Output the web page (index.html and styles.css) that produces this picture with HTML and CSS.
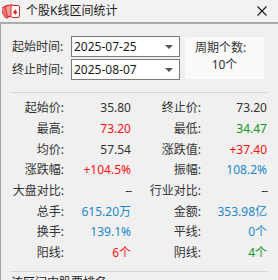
FILE: index.html
```html
<!DOCTYPE html>
<html lang="zh-CN">
<head>
<meta charset="utf-8">
<title>个股K线区间统计</title>
<link rel="stylesheet" href="styles.css">
</head>
<body>
<div class="window">
  <div class="titlebar">
    <svg class="app-icon" width="19" height="16" viewBox="0 0 19 16">
      <g stroke="#d42a2a" stroke-width="1">
        <rect x="3.5" y="2.5" width="8" height="11" rx="1.5" fill="#f07a7a" transform="rotate(-28 7.5 14)"/>
        <rect x="5.5" y="2" width="8" height="11" rx="1.5" fill="#f29a9a" transform="rotate(-12 9.5 14)"/>
        <rect x="9" y="2.5" width="8.5" height="12" rx="1.5" fill="#ffffff"/>
      </g>
      <path d="M13.2 6.2 L15.6 10.2 L10.8 10.2 Z" fill="#d42020"/>
      <rect x="12.8" y="9.8" width="0.9" height="2.2" fill="#d42020"/>
    </svg>
    <span class="title">个股K线区间统计</span>
    <svg class="close" width="10" height="10" viewBox="0 0 10 10">
      <path d="M0.5 0.5 L9.5 9.5 M9.5 0.5 L0.5 9.5" stroke="#1a1a1a" stroke-width="1.1" fill="none"/>
    </svg>
  </div>
  <div class="panel">
    <div class="query">
      <div class="fields">
        <div class="field">
          <span class="field-label">起始时间:</span>
          <div class="combo"><span class="combo-text">2025-07-25</span><span class="arrow"></span></div>
        </div>
        <div class="field">
          <span class="field-label">终止时间:</span>
          <div class="combo"><span class="combo-text">2025-08-07</span><span class="arrow"></span></div>
        </div>
      </div>
      <div class="period">
        <span class="period-label">周期个数:</span>
        <span class="period-value">10个</span>
      </div>
    </div>
    <div class="sep"></div>
    <div class="stats">
      <span class="lbl">起始价:</span><span class="val">35.80</span>
      <span class="lbl">终止价:</span><span class="val">73.20</span>

      <span class="lbl">最高:</span><span class="val red">73.20</span>
      <span class="lbl">最低:</span><span class="val green">34.47</span>

      <span class="lbl">均价:</span><span class="val">57.54</span>
      <span class="lbl">涨跌值:</span><span class="val red">+37.40</span>

      <span class="lbl">涨跌幅:</span><span class="val red">+104.5%</span>
      <span class="lbl">振幅:</span><span class="val blue">108.2%</span>

      <span class="lbl">大盘对比:</span><span class="val dash">--</span>
      <span class="lbl">行业对比:</span><span class="val dash">--</span>

      <span class="lbl">总手:</span><span class="val blue">615.20万</span>
      <span class="lbl">金额:</span><span class="val blue">353.98亿</span>

      <span class="lbl">换手:</span><span class="val blue">139.1%</span>
      <span class="lbl">平线:</span><span class="val blue">0个</span>

      <span class="lbl">阳线:</span><span class="val red">6个</span>
      <span class="lbl">阴线:</span><span class="val green">4个</span>
    </div>
    <div class="sep sep-bottom"></div>
    <div class="footer-text">该区间内股票排名</div>
  </div>
</div>
</body>
</html>
```

FILE: styles.css
```css
html, body {
  margin: 0;
  padding: 0;
}
body {
  width: 278px;
  height: 280px;
  overflow: hidden;
  background: #f0f0f0;
  font-family: "Noto Sans", "Noto Sans CJK SC", sans-serif;
  font-size: 12px;
  color: #333333;
}
.window {
  display: flex;
  flex-direction: column;
  height: 280px;
}
.titlebar {
  height: 22px;
  display: flex;
  align-items: center;
  background: #f2f2f2;
}
.app-icon {
  margin-left: 2px;
  flex: none;
}
.title {
  margin-left: 5px;
  font-size: 12px;
  line-height: 16px;
  color: #1a1a1a;
}
.close {
  margin-left: auto;
  margin-right: 11px;
  flex: none;
}
.panel {
  flex: 1;
  border-top: 2px solid #ababab;
  border-left: 1px solid #a6a6a6;
  background: #f0f0f0;
  overflow: hidden;
}
.query {
  display: flex;
  padding: 12px 0 0 11px;
}
.fields {
  display: flex;
  flex-direction: column;
  gap: 2px;
}
.field {
  display: flex;
  align-items: center;
  height: 21px;
}
.field-label {
  width: 59px;
  line-height: 16px;
  color: #333333;
}
.combo {
  box-sizing: border-box;
  width: 109px;
  height: 21px;
  background: #ffffff;
  border: 1px solid #7a7a7a;
  display: flex;
  align-items: center;
  padding-left: 2px;
}
.combo-text {
  line-height: 16px;
  color: #1a1a1a;
}
.arrow {
  margin-left: auto;
  margin-right: 6px;
  width: 0;
  height: 0;
  border-left: 4px solid transparent;
  border-right: 4px solid transparent;
  border-top: 4px solid #555555;
}
.period {
  margin-left: 5px;
  margin-top: 1px;
  width: 79px;
  height: 42px;
  background: #fafafa;
  display: flex;
  flex-direction: column;
  align-items: center;
  padding-top: 2px;
  box-sizing: border-box;
}
.period-label {
  line-height: 17px;
  margin-right: 8px;
}
.period-value {
  line-height: 18px;
}
.sep {
  height: 1px;
  background: #d4d4d4;
  margin: 12px 11px 0 10px;
}
.stats {
  display: grid;
  grid-template-columns: 63px 67px 70px 66px;
  grid-auto-rows: 20.7px;
  padding-top: 5px;
  align-items: center;
}
.lbl {
  text-align: right;
  line-height: 16px;
  color: #333333;
}
.val {
  text-align: right;
  line-height: 16px;
  color: #333333;
}
.red { color: #ff1010; }
.green { color: #16961a; }
.blue { color: #2089cc; }
.dash { letter-spacing: -1px; }
.sep-bottom {
  margin-top: 7px;
}
.footer-text {
  margin: 3px 0 0 10px;
  line-height: 16px;
  color: #1a1a1a;
}
```
